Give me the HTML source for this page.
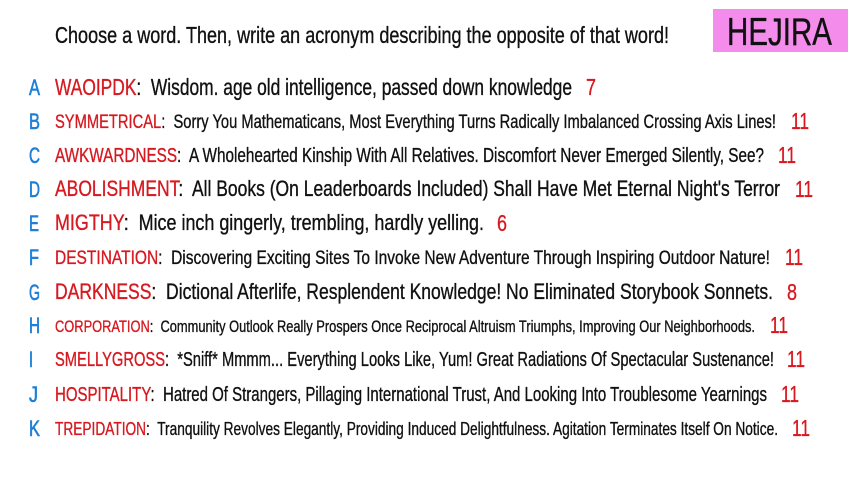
<!DOCTYPE html>
<html><head><meta charset="utf-8"><style>
html,body{margin:0;padding:0;background:#fff;width:853px;height:480px;overflow:hidden}
svg text{font-family:"Liberation Sans",sans-serif;fill:#111;stroke:#111;stroke-width:0.35;white-space:pre}
.r{fill:#d71920;stroke:#d71920}.b{fill:#1e7fd8;stroke:#1e7fd8;stroke-width:0.6}
</style></head><body>
<svg width="853" height="480" viewBox="0 0 853 480">
<rect x="713" y="9" width="135" height="43" fill="#f48cec"/>
<text x="727" y="45" font-size="39" stroke-width="0.8" textLength="105" lengthAdjust="spacingAndGlyphs">HEJIRA</text>
<text x="55" y="43" font-size="23" textLength="614" lengthAdjust="spacingAndGlyphs">Choose a word. Then, write an acronym describing the opposite of that word!</text>

<text class="b" x="29" y="95" font-size="22" textLength="11" lengthAdjust="spacingAndGlyphs">A</text>
<text x="55" y="95" font-size="23" textLength="517" lengthAdjust="spacingAndGlyphs"><tspan class="r">WAOIPDK</tspan>:  Wisdom. age old intelligence, passed down knowledge</text>
<text class="r" x="586" y="95" font-size="23" textLength="10" lengthAdjust="spacingAndGlyphs">7</text>

<text class="b" x="29" y="129" font-size="22" textLength="11" lengthAdjust="spacingAndGlyphs">B</text>
<text x="55" y="128" font-size="19" textLength="721" lengthAdjust="spacingAndGlyphs"><tspan class="r">SYMMETRICAL</tspan>:  Sorry You Mathematicans, Most Everything Turns Radically Imbalanced Crossing Axis Lines!</text>
<text class="r" x="791" y="129" font-size="23" textLength="18" lengthAdjust="spacingAndGlyphs">11</text>

<text class="b" x="29" y="163" font-size="22" textLength="11" lengthAdjust="spacingAndGlyphs">C</text>
<text x="55" y="162" font-size="20" textLength="709" lengthAdjust="spacingAndGlyphs"><tspan class="r">AWKWARDNESS</tspan>:  A Wholehearted Kinship With All Relatives. Discomfort Never Emerged Silently, See?</text>
<text class="r" x="778" y="163" font-size="23" textLength="18" lengthAdjust="spacingAndGlyphs">11</text>

<text class="b" x="29" y="197" font-size="22" textLength="11" lengthAdjust="spacingAndGlyphs">D</text>
<text x="55" y="196" font-size="22" textLength="725" lengthAdjust="spacingAndGlyphs"><tspan class="r">ABOLISHMENT</tspan>:  All Books (On Leaderboards Included) Shall Have Met Eternal Night's Terror</text>
<text class="r" x="795" y="197" font-size="23" textLength="18" lengthAdjust="spacingAndGlyphs">11</text>

<text class="b" x="29" y="231" font-size="22" textLength="10" lengthAdjust="spacingAndGlyphs">E</text>
<text x="55" y="230" font-size="22" textLength="429" lengthAdjust="spacingAndGlyphs"><tspan class="r">MIGTHY</tspan>:  Mice inch gingerly, trembling, hardly yelling.</text>
<text class="r" x="497" y="231" font-size="23" textLength="10" lengthAdjust="spacingAndGlyphs">6</text>

<text class="b" x="29" y="265" font-size="22" textLength="10" lengthAdjust="spacingAndGlyphs">F</text>
<text x="55" y="264" font-size="19" textLength="715" lengthAdjust="spacingAndGlyphs"><tspan class="r">DESTINATION</tspan>:  Discovering Exciting Sites To Invoke New Adventure Through Inspiring Outdoor Nature!</text>
<text class="r" x="785" y="265" font-size="23" textLength="18" lengthAdjust="spacingAndGlyphs">11</text>

<text class="b" x="29" y="300" font-size="22" textLength="11" lengthAdjust="spacingAndGlyphs">G</text>
<text x="55" y="299" font-size="22" textLength="718" lengthAdjust="spacingAndGlyphs"><tspan class="r">DARKNESS</tspan>:  Dictional Afterlife, Resplendent Knowledge! No Eliminated Storybook Sonnets.</text>
<text class="r" x="787" y="300" font-size="23" textLength="10" lengthAdjust="spacingAndGlyphs">8</text>

<text class="b" x="29" y="333" font-size="22" textLength="11" lengthAdjust="spacingAndGlyphs">H</text>
<text x="55" y="332" font-size="17" textLength="700" lengthAdjust="spacingAndGlyphs"><tspan class="r">CORPORATION</tspan>:  Community Outlook Really Prospers Once Reciprocal Altruism Triumphs, Improving Our Neighborhoods.</text>
<text class="r" x="770" y="333" font-size="23" textLength="18" lengthAdjust="spacingAndGlyphs">11</text>

<text class="b" x="29" y="367" font-size="22" textLength="4" lengthAdjust="spacingAndGlyphs">I</text>
<text x="55" y="366" font-size="20" textLength="719" lengthAdjust="spacingAndGlyphs"><tspan class="r">SMELLYGROSS</tspan>:  *Sniff* Mmmm... Everything Looks Like, Yum! Great Radiations Of Spectacular Sustenance!</text>
<text class="r" x="787" y="367" font-size="23" textLength="18" lengthAdjust="spacingAndGlyphs">11</text>

<text class="b" x="29" y="402" font-size="22" textLength="9" lengthAdjust="spacingAndGlyphs">J</text>
<text x="55" y="401" font-size="20" textLength="712" lengthAdjust="spacingAndGlyphs"><tspan class="r">HOSPITALITY</tspan>:  Hatred Of Strangers, Pillaging International Trust, And Looking Into Troublesome Yearnings</text>
<text class="r" x="781" y="402" font-size="23" textLength="18" lengthAdjust="spacingAndGlyphs">11</text>

<text class="b" x="29" y="436" font-size="22" textLength="11" lengthAdjust="spacingAndGlyphs">K</text>
<text x="55" y="435" font-size="18" textLength="723" lengthAdjust="spacingAndGlyphs"><tspan class="r">TREPIDATION</tspan>:  Tranquility Revolves Elegantly, Providing Induced Delightfulness. Agitation Terminates Itself On Notice.</text>
<text class="r" x="792" y="436" font-size="23" textLength="18" lengthAdjust="spacingAndGlyphs">11</text>
</svg>
</body></html>
